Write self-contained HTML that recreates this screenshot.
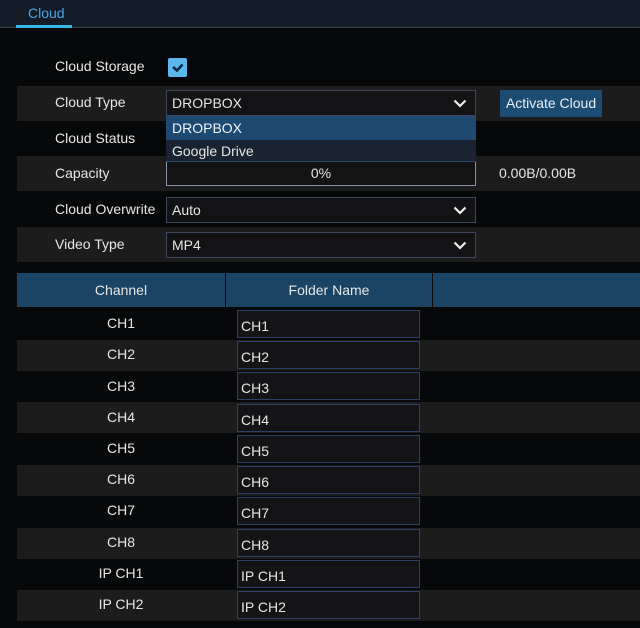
<!DOCTYPE html>
<html><head><meta charset="utf-8"><style>
*{margin:0;padding:0;box-sizing:border-box}
body{width:640px;height:628px;background:#070809;font-family:"Liberation Sans",Arial,sans-serif;color:#e6e6e6;font-size:13px;position:relative;overflow:hidden}
.a{position:absolute}
.top{left:0;top:0;width:640px;height:28px;background:#141d27;border-bottom:1px solid #3a4450}
.tab{left:28px;top:5px;color:#4ea3e6;font-size:14px}
.ul{left:16px;top:25px;width:56px;height:3px;background:#36b4e8}
.row{left:17px;width:623px;height:35px}
.g{background:#1c1c1d}
.lbl{left:55px;font-size:14px}
.sel{left:166px;width:310px;height:26px;background:#131316;border:1px solid #3c4660;padding-left:5px;line-height:25px;font-size:14px}
.chev{position:absolute;right:8px;top:8px}
.th{top:273px;height:34px;background:#1b4364;text-align:center;line-height:34px;font-size:14px}
.cl{left:17px;width:623px;height:31px}
.inp{left:237px;width:183px;height:28px;background:#141416;border:1px solid #2f3e66;padding-left:3px;line-height:30px;font-size:14px}
.cn{left:17px;width:208px;text-align:center;font-size:14px}
</style></head><body>
<div class="a top"></div>
<div class="a tab">Cloud</div>
<div class="a ul"></div>

<div class="a lbl" style="top:58px">Cloud Storage</div>
<div class="a" style="left:168px;top:58px;width:19px;height:19px;background:#5bb7ec;border-radius:2px">
<svg width="19" height="19"><path d="M5 9 L9 12.5 L14.5 6.5" stroke="#0d2a4a" stroke-width="2.6" fill="none"/></svg></div>

<div class="a row g" style="top:86px"></div>
<div class="a lbl" style="top:94px">Cloud Type</div>
<div class="a sel" style="top:90px">DROPBOX<svg class="chev" width="14" height="9"><path d="M1.5 1.5 L7 7 L12.5 1.5" stroke="#eee" stroke-width="2.2" fill="none"/></svg></div>
<div class="a" style="left:500px;top:90px;width:102px;height:27px;background:#1d4c73;color:#e8eef4;text-align:center;line-height:26px;font-size:14px">Activate Cloud</div>

<div class="a lbl" style="top:130px">Cloud Status</div>

<div class="a row g" style="top:156px"></div>
<div class="a lbl" style="top:165px">Capacity</div>
<div class="a" style="left:166px;top:160px;width:310px;height:26px;background:#131313;border:1px solid #8a96a8;text-align:center;line-height:24px;font-size:14px">0%</div>
<div class="a" style="left:499px;top:165px;font-size:14px">0.00B/0.00B</div>

<div class="a" style="left:166px;top:116px;width:310px;height:24px;background:#1e4a72;padding-left:6px;line-height:25px;font-size:14px;color:#f0f4f8">DROPBOX</div>
<div class="a" style="left:166px;top:140px;width:310px;height:22px;background:#1a2331;padding-left:6px;line-height:23px;font-size:14px;border-bottom:1px solid #2a4a6a">Google Drive</div>

<div class="a lbl" style="top:201px">Cloud Overwrite</div>
<div class="a sel" style="top:197px">Auto<svg class="chev" width="14" height="9"><path d="M1.5 1.5 L7 7 L12.5 1.5" stroke="#eee" stroke-width="2.2" fill="none"/></svg></div>

<div class="a row g" style="top:227px"></div>
<div class="a lbl" style="top:236px">Video Type</div>
<div class="a sel" style="top:232px">MP4<svg class="chev" width="14" height="9"><path d="M1.5 1.5 L7 7 L12.5 1.5" stroke="#eee" stroke-width="2.2" fill="none"/></svg></div>

<div class="a th" style="left:17px;width:208px">Channel</div>
<div class="a th" style="left:226px;width:206px">Folder Name</div>
<div class="a th" style="left:433px;width:207px"></div>

<div class="a cl" style="top:308px"></div>
<div class="a cn" style="top:315px">CH1</div><div class="a inp" style="top:310px">CH1</div>
<div class="a cl g" style="top:340px"></div>
<div class="a cn" style="top:346px">CH2</div><div class="a inp" style="top:341px">CH2</div>
<div class="a cn" style="top:378px">CH3</div><div class="a inp" style="top:372px">CH3</div>
<div class="a cl g" style="top:402px"></div>
<div class="a cn" style="top:409px">CH4</div><div class="a inp" style="top:404px">CH4</div>
<div class="a cn" style="top:440px">CH5</div><div class="a inp" style="top:435px">CH5</div>
<div class="a cl g" style="top:465px"></div>
<div class="a cn" style="top:471px">CH6</div><div class="a inp" style="top:466px">CH6</div>
<div class="a cn" style="top:502px">CH7</div><div class="a inp" style="top:497px">CH7</div>
<div class="a cl g" style="top:528px"></div>
<div class="a cn" style="top:534px">CH8</div><div class="a inp" style="top:529px">CH8</div>
<div class="a cn" style="top:565px">IP CH1</div><div class="a inp" style="top:560px">IP CH1</div>
<div class="a cl g" style="top:590px"></div>
<div class="a cn" style="top:596px">IP CH2</div><div class="a inp" style="top:591px">IP CH2</div>
</body></html>
